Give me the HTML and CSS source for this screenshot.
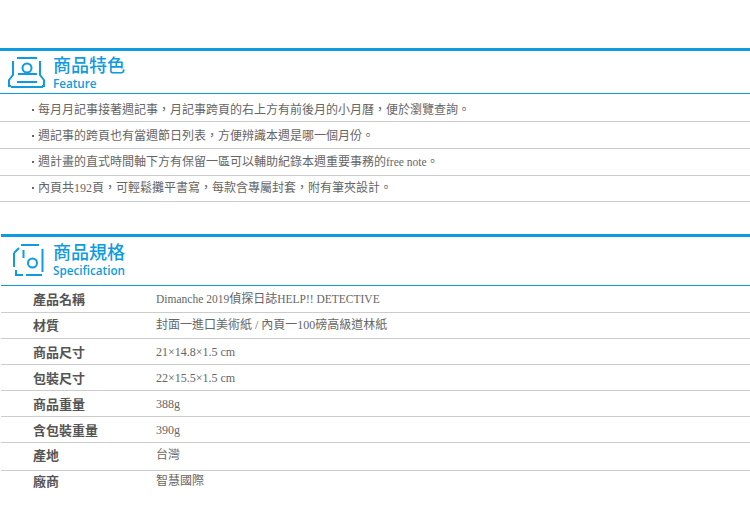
FILE: index.html
```html
<!DOCTYPE html>
<html lang="zh-Hant">
<head>
<meta charset="utf-8">
<title>商品</title>
<link rel="stylesheet" href="styles.css">
</head>
<body>
<section class="section section-feature">
  <header class="head">
    <svg class="icon" width="40" height="32" viewBox="0 0 40 32" fill="none" stroke="#0e9be0" stroke-width="2">
      <path d="M9 1h20"/>
      <path d="M5 4v14l-4 5v6h2M32 4v14l4 5v6h-2"/>
      <circle cx="19" cy="11" r="4.5"/>
      <path d="M10 17h19"/>
      <path d="M9 25h20M3 30h32"/>
    </svg>
    <div class="titles">
      <h2 class="title">商品特色</h2>
      <p class="subtitle">Feature</p>
    </div>
  </header>
  <ul class="features">
    <li>每月月記事接著週記事，月記事跨頁的右上方有前後月的小月曆，便於瀏覽查詢。</li>
    <li>週記事的跨頁也有當週節日列表，方便辨識本週是哪一個月份。</li>
    <li>週計畫的直式時間軸下方有保留一區可以輔助紀錄本週重要事務的<span class="latin">free note</span>。</li>
    <li>內頁共192頁，可輕鬆攤平書寫，每款含專屬封套，附有筆夾設計。</li>
  </ul>
</section>
<section class="section section-spec">
  <header class="head">
    <svg class="icon" width="40" height="34" viewBox="0 0 40 34" fill="none" stroke="#0e9be0" stroke-width="2">
      <path d="M8 1h18"/>
      <path d="M1 9v14M1 9l5-5"/>
      <path d="M29.5 5v23"/>
      <path d="M10.5 6v8"/>
      <circle cx="19.5" cy="19" r="4.5"/>
      <path d="M3 26v5h7M13 31h16"/>
    </svg>
    <div class="titles">
      <h2 class="title">商品規格</h2>
      <p class="subtitle">Specification</p>
    </div>
  </header>
  <dl class="specs">
    <div class="spec"><dt>產品名稱</dt><dd><span class="latin">Dimanche 2019</span>偵探日誌<span class="latin">HELP!! DETECTIVE</span></dd></div>
    <div class="spec"><dt>材質</dt><dd>封面一進口美術紙 / 內頁一100磅高級道林紙</dd></div>
    <div class="spec"><dt>商品尺寸</dt><dd>21×14.8×1.5 cm</dd></div>
    <div class="spec"><dt>包裝尺寸</dt><dd>22×15.5×1.5 cm</dd></div>
    <div class="spec"><dt>商品重量</dt><dd>388g</dd></div>
    <div class="spec"><dt>含包裝重量</dt><dd>390g</dd></div>
    <div class="spec"><dt>產地</dt><dd>台灣</dd></div>
    <div class="spec"><dt>廠商</dt><dd>智慧國際</dd></div>
  </dl>
</section>
</body>
</html>
```
FILE: styles.css
```css
* { box-sizing: border-box; }
html, body { margin: 0; padding: 0; }
body {
  width: 750px;
  height: 511px;
  overflow: hidden;
  background: #fff;
  color: #666;
  font-family: "Liberation Serif", "Noto Sans CJK TC", serif;
  font-size: 12px;
}
.section { border-top: 3px solid #0e9be0; }
.section-feature { margin-top: 48px; }
.section-spec { margin-top: 32px; margin-left: 1px; }
.head {
  display: flex;
  align-items: center;
  height: 43px;
  border-bottom: 1px solid #0e9be0;
}
.section-spec .head { height: 49px; padding-bottom: 4px; }
.icon { flex: none; margin-left: 8px; margin-right: 5px; }
.section-feature .icon { margin-top: 2px; }
.section-spec .icon { margin-left: 12px; margin-right: 0; margin-top: 4px; }
.titles { display: flex; flex-direction: column; gap: 2px; }
.section-feature .titles { margin-top: 1px; }
.section-spec .titles { margin-top: 1px; }
.title {
  margin: 0;
  font-family: "Noto Sans CJK TC", sans-serif;
  font-size: 18px;
  line-height: 19px;
  font-weight: 500;
  color: #0e9be0;
}
.subtitle {
  margin: 0;
  font-family: "Open Sans", sans-serif;
  font-size: 11.7px;
  line-height: 15px;
  font-weight: 600;
  color: #0e9be0;
}
.features { list-style: none; margin: 0; padding: 0; }
.features li {
  height: 27px;
  line-height: 16px;
  padding-top: 5px;
  padding-left: 32px;
  border-bottom: 1px solid #ccc;
}
.features li:nth-child(1) { height: 28px; padding-top: 8px; }
.features li:nth-child(2) { padding-top: 6px; }
.features li:nth-child(4) { height: 26px; padding-top: 4px; }
.features li::before {
  content: "";
  display: inline-block;
  width: 2px;
  height: 2px;
  margin-right: 4px;
  vertical-align: 3px;
  background: #666;
}
.latin { font-size: 11.5px; }
.specs { margin: 0; }
.spec {
  display: flex;
  height: 26px;
  line-height: 26px;
  border-bottom: 1px solid #ccc;
}
.spec:nth-child(1) { height: 27px; }
.spec:nth-child(2) { line-height: 24px; }
.spec:nth-child(7) { height: 28px; line-height: 24px; }
.spec:nth-child(8) { line-height: 20px; border-bottom: 0; }
.spec dt {
  width: 155px;
  padding-left: 32px;
  font-family: "Noto Sans CJK TC", sans-serif;
  font-size: 13px;
  font-weight: 700;
  color: #555;
}
.spec dd { margin: 0; }
```
